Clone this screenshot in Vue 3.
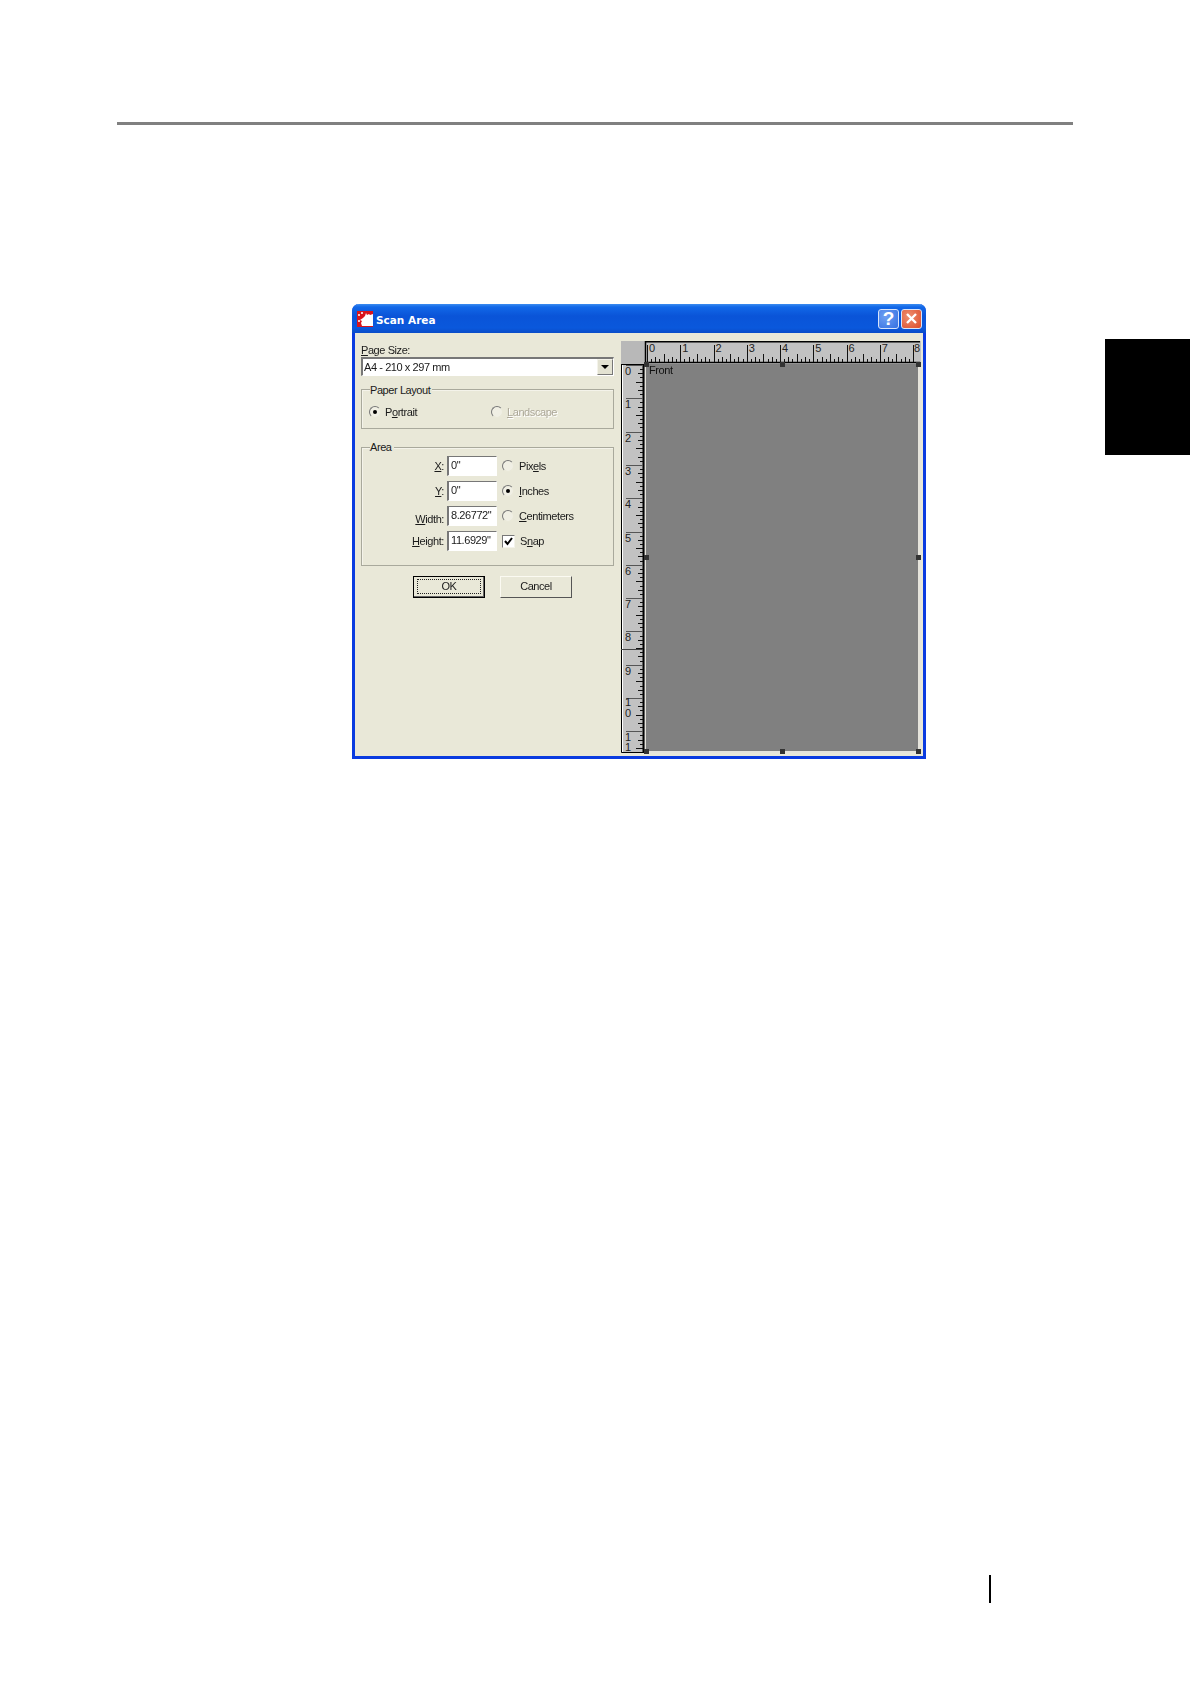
<template>
  <div class="page">
    <div class="top-rule"></div>

    <div class="middle">
      <div class="dialog">
        <!-- title bar -->
        <div class="titlebar">
          <svg class="app-icon" width="16" height="16" viewBox="0 0 16 16">
            <rect width="16" height="16" fill="#d8141c" />
            <path d="M6 7l2-2 1-3 1 2 2-1 1 1 3-1v12H5l-1-3 1-2-2-1z" fill="#fff" />
            <path d="M1 3h2v2H1zM4 1h2v2H4zM1 9h2v2H1z" fill="#f6c8c8" />
          </svg>
          <span class="title">Scan Area</span>
          <button class="cap-btn help">?</button>
          <button class="cap-btn close">
            <svg width="13" height="13" viewBox="0 0 13 13">
              <path d="M2 2l9 9M11 2l-9 9" stroke="#fff" stroke-width="2.4" fill="none" />
            </svg>
          </button>
        </div>

        <div class="body">
          <!-- left side: the form -->
          <div class="form">
            <div class="label"><u>P</u>age Size:</div>
            <div class="combo">
              <span>A4 - 210 x 297 mm</span>
              <span class="combo-btn"><i></i></span>
            </div>

            <div class="group layout-group">
              <span class="legend">Paper Layout</span>
              <div class="layout-row">
                <label class="opt"><span class="radio on"></span><span>P<u>o</u>rtrait</span></label>
                <label class="opt disabled"><span class="radio"></span><span><u>L</u>andscape</span></label>
              </div>
            </div>

            <div class="group area-group">
              <span class="legend">Area</span>
              <div class="area-grid">
                <template v-for="row in areaRows" :key="row.unit">
                  <span class="field-label" :class="row.cls"><u>{{ row.key }}</u>{{ row.rest }}:</span>
                  <span class="input">{{ row.value }}</span>
                  <label class="opt unit">
                    <span :class="row.check ? 'check' : ['radio', { on: row.on }]">
                      <svg v-if="row.check" width="11" height="11" viewBox="0 0 11 11">
                        <path d="M2 5l2.5 3L9 2" stroke="#000" stroke-width="2" fill="none" />
                      </svg>
                    </span>
                    <span>{{ row.before }}<u>{{ row.ukey }}</u>{{ row.after }}</span>
                  </label>
                </template>
              </div>
            </div>

            <div class="buttons">
              <button class="btn default"><span>OK</span></button>
              <button class="btn">Cancel</button>
            </div>
          </div>

          <!-- right side: rulers and preview -->
          <div class="preview">
            <div class="corner"></div>
            <svg class="ruler" width="276" height="23" viewBox="0 0 276 23">
              <path d="M0 .75H275M.5 0V23M0 21.5H275" stroke="#000" stroke-width="1.5" fill="none" />
              <path :d="hTicks" stroke="#111" fill="none" />
              <text v-for="n in 9" :key="n" class="num" :x="hX(n - 1) + (n === 9 ? 1 : 2)" y="11">{{ n - 1 }}</text>
            </svg>
            <svg class="ruler" width="24" height="389" viewBox="0 0 24 389">
              <path d="M.5 0V388.5H23M0 .5H24" stroke="#000" fill="none" />
              <path d="M1.5 1V388" stroke="#fff" fill="none" />
              <path d="M22.5 0V388" stroke="#000" stroke-width="2" fill="none" />
              <path :d="vTicks" stroke="#111" fill="none" />
              <path :d="vMajor" stroke="#555" fill="none" />
              <path d="M0 285.5H22" stroke="#444" fill="none" />
              <text v-for="n in vLabels" :key="n.y" class="num" x="4" :y="n.y">{{ n.t }}</text>
            </svg>
            <div class="sheet-cell">
              <div class="sheet">
                <span class="front">Front</span>
                <i v-for="h in handles" :key="h" class="handle" :class="h"></i>
              </div>
            </div>
          </div>
        </div>
      </div>

      <div class="tab"></div>
    </div>

    <div class="page-mark"></div>
  </div>
</template>

<script setup>
const areaRows = [
  { key: 'X', rest: '', value: '0"', before: 'Pix', ukey: 'e', after: 'ls', unit: 'px' },
  { key: 'Y', rest: '', value: '0"', before: '', ukey: 'I', after: 'nches', unit: 'in', on: true },
  { key: 'W', rest: 'idth', value: '8.26772"', before: '', ukey: 'C', after: 'entimeters', unit: 'cm', cls: 'low' },
  { key: 'H', rest: 'eight', value: '11.6929"', before: 'S', ukey: 'n', after: 'ap', unit: 'snap', check: true }
];

const handles = ['tl', 'tm', 'tr', 'ml', 'mr', 'bl', 'bm', 'br'];

const STEP = 33.25;
const hX = (n) => 2 + n * STEP;

// one tick every 1/8 inch, longer on the half and quarter marks
const tickLen = (i) => {
  if (i % 8 === 0) return 17;
  if (i % 4 === 0) return 8;
  if (i % 2 === 0) return 5;
  return 3;
};

let h = '';
for (let i = 0; i <= 64; i++) {
  const x = Math.round(2 + (i * STEP) / 8) + 0.5;
  h += `M${x} 21V${21 - tickLen(i)}`;
}
const hTicks = h;

let v = '';
let vm = '';
for (let i = 0; i <= 92; i++) {
  const y = Math.round(1 + (i * 33.3) / 8) + 0.5;
  if (y > 388) break;
  if (i % 8 === 0) {
    vm += `M22 ${y}H5`;
  } else {
    const len = i % 4 === 0 ? 7 : i % 2 === 0 ? 5 : 3;
    v += `M22 ${y}H${22 - len}`;
  }
}
const vTicks = v;
const vMajor = vm;

const vLabels = [];
for (let n = 0; n < 10; n++) {
  vLabels.push({ y: 11 + n * 33.3, t: String(n) });
}
vLabels.push({ y: 342, t: '1' }, { y: 353, t: '0' }, { y: 377, t: '1' }, { y: 387, t: '1' });
</script>

<style scoped>
.page {
  width: 1190px;
  height: 1684px;
  background: #fff;
  overflow: hidden;
  display: flex;
  flex-direction: column;
  font-family: "Liberation Sans", Arial, sans-serif;
}

.top-rule {
  width: 956px;
  height: 3px;
  margin: 122px 0 0 117px;
  background: #808080;
}

.middle {
  display: flex;
  align-items: flex-start;
  margin-top: 179px;
}

.tab {
  width: 85px;
  height: 116px;
  margin: 35px 0 0 179px;
  background: #000;
}

.page-mark {
  width: 2px;
  height: 28px;
  margin: 816px 0 0 989px;
  background: #000;
}

.dialog {
  width: 574px;
  height: 455px;
  margin-left: 352px;
  box-sizing: border-box;
  border: 3px solid #0a3be0;
  border-top: 0;
  border-radius: 7px 7px 0 0;
  background: #e9e8d8;
  display: flex;
  flex-direction: column;
  font-size: 11px;
  letter-spacing: -0.42px;
  color: #1a1a1a;
  filter: blur(0.4px);
}

.titlebar {
  height: 29px;
  margin: 0 -3px;
  padding: 0 4px 0 5px;
  border-radius: 7px 7px 0 0;
  background: linear-gradient(#3b8cf0 0, #1268e8 3px, #0a54d8 12px, #0a58dc 24px, #0a4cc8 29px);
  display: flex;
  align-items: center;
  flex-shrink: 0;
}

.app-icon {
  flex-shrink: 0;
}

.title {
  margin: 3px 0 0 3px;
  flex: 1;
  font-family: "DejaVu Sans", sans-serif;
  font-size: 10.5px;
  font-weight: bold;
  letter-spacing: 0;
  color: #fff;
}

.cap-btn {
  width: 21px;
  height: 20px;
  padding: 0;
  margin-left: 2px;
  border: 1px solid #d8e4fa;
  border-radius: 3px;
  display: flex;
  align-items: center;
  justify-content: center;
}

.help {
  background: radial-gradient(circle at 35% 35%, #6fa0f2, #3470e2);
  font: bold 19px "Liberation Sans", sans-serif;
  color: #fff;
}

.close {
  background: radial-gradient(circle at 35% 35%, #ee8f70, #dc4c2a);
}

.body {
  flex: 1;
  display: flex;
  padding: 8px 2px 0 6px;
  min-height: 0;
}

.form {
  width: 253px;
  padding-top: 3px;
  margin-right: 7px;
  flex-shrink: 0;
}

.label {
  height: 13px;
  line-height: 13px;
}

.combo {
  height: 19px;
  box-sizing: border-box;
  border: 1px solid;
  border-color: #777 #fff #fff #777;
  border-top-width: 2px;
  border-left-width: 2px;
  background: #fff;
  display: flex;
  align-items: center;
  justify-content: space-between;
  padding-left: 1px;
}

.combo-btn {
  width: 16px;
  height: 16px;
  box-sizing: border-box;
  border: 1px solid;
  border-color: #f4f3ea #777 #777 #f4f3ea;
  background: #e3e2d2;
  display: flex;
  align-items: center;
  justify-content: center;
}

.combo-btn i {
  border: 4px solid transparent;
  border-top: 4px solid #000;
  border-bottom: 0;
}

.group {
  position: relative;
  box-sizing: border-box;
  border: 1px solid #a9a99c;
  box-shadow: inset 1px 1px 0 #f4f3ea;
}

.legend {
  position: absolute;
  top: -7px;
  left: 8px;
  padding: 0 2px 0 0;
  line-height: 13px;
  background: #e9e8d8;
}

.layout-group {
  height: 40px;
  margin-top: 13px;
  padding: 15px 0 0 7px;
}

.layout-group .legend {
  top: -6px;
}

.layout-row {
  display: grid;
  grid-template-columns: 122px auto;
}

.opt {
  display: flex;
  align-items: center;
  gap: 4px;
  height: 14px;
}

.disabled {
  color: #aca899;
  text-shadow: 1px 1px 0 #fff;
}

.radio {
  position: relative;
  width: 12px;
  height: 12px;
  box-sizing: border-box;
  flex-shrink: 0;
  border: 1px solid;
  border-color: #777 #e9e8d8 #e9e8d8 #777;
  border-radius: 50%;
  background: #f0efe4;
}

.radio.on::after {
  content: "";
  position: absolute;
  left: 3px;
  top: 3px;
  width: 4px;
  height: 4px;
  border-radius: 50%;
  background: #000;
}

.check {
  width: 13px;
  height: 13px;
  box-sizing: border-box;
  flex-shrink: 0;
  border: 1px solid;
  border-color: #777 #f4f3ea #f4f3ea #777;
  background: #fff;
  display: flex;
}

.area-group {
  height: 119px;
  margin-top: 18px;
  padding-top: 8px;
}

.area-grid {
  display: grid;
  grid-template-columns: 85px 50px auto;
  grid-auto-rows: 20px;
  row-gap: 5px;
  align-items: center;
}

.field-label {
  text-align: right;
  padding-right: 3px;
}

.field-label.low {
  margin-top: 6px;
}

.input {
  height: 20px;
  line-height: 16px;
  box-sizing: border-box;
  border: 1px solid;
  border-color: #777 #fff #fff #777;
  border-left-width: 2px;
  background: #fff;
  padding-left: 2px;
}

.unit {
  margin-left: 5px;
  gap: 5px;
}

.buttons {
  display: flex;
  gap: 15px;
  margin: 10px 0 0 52px;
}

.btn {
  width: 72px;
  height: 22px;
  padding: 0 0 2px;
  box-sizing: border-box;
  border: 1px solid;
  border-color: #fbfaf2 #555 #555 #fbfaf2;
  background: #e9e8d8;
  font: inherit;
  letter-spacing: inherit;
  color: inherit;
}

.btn.default {
  border: 1px solid #000;
  box-shadow: inset -1px -1px 0 #666;
  padding: 2px 3px 3px 3px;
}

.btn.default span {
  display: block;
  height: 100%;
  box-sizing: border-box;
  border: 1px dotted #222;
  line-height: 13px;
}

.preview {
  display: grid;
  grid-template-columns: 24px 276px;
  grid-template-rows: 23px 389px;
  align-self: flex-start;
}

.corner {
  background: #b8b8b8;
}

.ruler {
  display: block;
  background: #c2c2c2;
  overflow: visible;
}

.num {
  font-family: "Liberation Sans", sans-serif;
  font-size: 11px;
  fill: #222;
  letter-spacing: 0;
}

.sheet-cell {
  padding-left: 1px;
  background: #e6e4dc;
}

.sheet {
  position: relative;
  width: 272px;
  height: 387px;
  background: #808080;
}

.front {
  position: absolute;
  left: 3px;
  top: 0;
  line-height: 13px;
  color: #111;
}

.handle {
  position: absolute;
  width: 5px;
  height: 5px;
  margin: -2px 0 0 -2px;
  background: #333;
}

.tl { left: 0; top: 0; }
.tm { left: 136px; top: 0; }
.tr { left: 272px; top: 0; }
.ml { left: 0; top: 193px; }
.mr { left: 272px; top: 193px; }
.bl { left: 0; top: 387px; }
.bm { left: 136px; top: 387px; }
.br { left: 272px; top: 387px; }
</style>
